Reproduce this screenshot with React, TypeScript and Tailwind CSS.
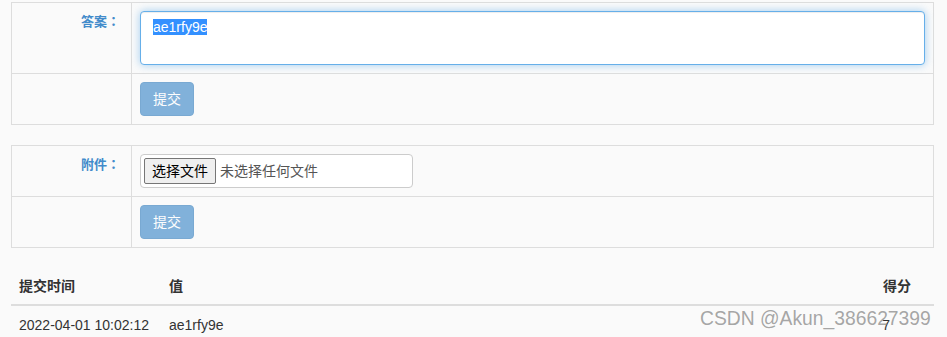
import React from "react";

const font = { fontFamily: '"Liberation Sans", Arial, "Noto Sans CJK SC", sans-serif' };
const cjk = { fontFamily: '"Noto Sans CJK SC", "Liberation Sans", sans-serif' };
const colon = { fontFamily: '"Noto Sans CJK JP", "Noto Sans CJK SC", sans-serif' };

function SubmitBtn() {
  return (
    <div className="w-[54px] h-[34px] rounded-[4px] bg-[#428bca] opacity-65 text-white text-[14px] flex items-center justify-center border border-[#357ebd]">
      提交
    </div>
  );
}

function Label({ text }: { text: string }) {
  return (
    <div className="w-[120px] shrink-0 border-r border-[#ddd] pt-[8px] px-[8px] pr-[11px] text-right font-bold text-[13px] leading-[20px] text-[#428bca]" style={cjk}>
      {text}
      <span style={colon}>：</span>
    </div>
  );
}

export default function App() {
  return (
    <div className="relative w-[947px] h-[337px] overflow-hidden bg-[#fafafa] text-[#333] text-[14px] leading-[20px]" style={font}>
      <div className="pt-[2px] px-[11px] w-[945px]">
        {/* Box 1 */}
        <div className="border border-[#ddd]">
          <div className="flex border-b border-[#ddd]">
            <Label text="答案" />
            <div className="flex-1 p-[8px]">
              <div className="h-[54px] rounded-[4px] border border-[#66afe9] bg-white px-[12px] py-[6px] shadow-[inset_0_1px_1px_rgba(0,0,0,0.075),0_0_8px_rgba(102,175,233,0.6)] text-[14px] leading-[19px]">
                <span className="bg-[#3390ff] text-white">ae1rfy9e</span>
              </div>
            </div>
          </div>
          <div className="flex">
            <div className="w-[120px] shrink-0 border-r border-[#ddd]" />
            <div className="flex-1 p-[8px]">
              <SubmitBtn />
            </div>
          </div>
        </div>

        {/* Box 2 */}
        <div className="border border-[#ddd] mt-[20px]">
          <div className="flex border-b border-[#ddd]">
            <Label text="附件" />
            <div className="flex-1 p-[8px]">
              <div className="w-[273px] h-[34px] rounded-[4px] border border-[#ccc] bg-white flex items-center pl-[3px] gap-[4px]">
                <div className="h-[26px] w-[72px] rounded-[2px] border border-[#767676] bg-[#efefef] text-black text-[14px] flex items-center justify-center">
                  选择文件
                </div>
                <span className="text-[14px] text-[#555]">未选择任何文件</span>
              </div>
            </div>
          </div>
          <div className="flex">
            <div className="w-[120px] shrink-0 border-r border-[#ddd]" />
            <div className="flex-1 p-[8px]">
              <SubmitBtn />
            </div>
          </div>
        </div>

        {/* Table */}
        <div className="mt-[20px]">
          <div className="flex border-b-2 border-[#ddd] font-bold text-[14px]">
            <div className="w-[150px] p-[8px] leading-[20px]">提交时间</div>
            <div className="flex-1 p-[8px] leading-[20px]">值</div>
            <div className="p-[8px] pr-[23px] leading-[20px] text-right">得分</div>
          </div>
          <div className="flex text-[14px]">
            <div className="w-[150px] p-[8px] pt-[9px] leading-[20px]">2022-04-01 10:02:12</div>
            <div className="flex-1 p-[8px] pt-[9px] leading-[20px]">ae1rfy9e</div>
            <div className="p-[8px] pt-[9px] pr-[44px] leading-[20px] text-right">7</div>
          </div>
        </div>
      </div>

      <div className="absolute left-[700px] top-[307px] text-[19.3px] leading-[24px] text-[rgba(128,128,128,0.7)] whitespace-nowrap" style={font}>
        CSDN @Akun_386627399
      </div>
    </div>
  );
}
